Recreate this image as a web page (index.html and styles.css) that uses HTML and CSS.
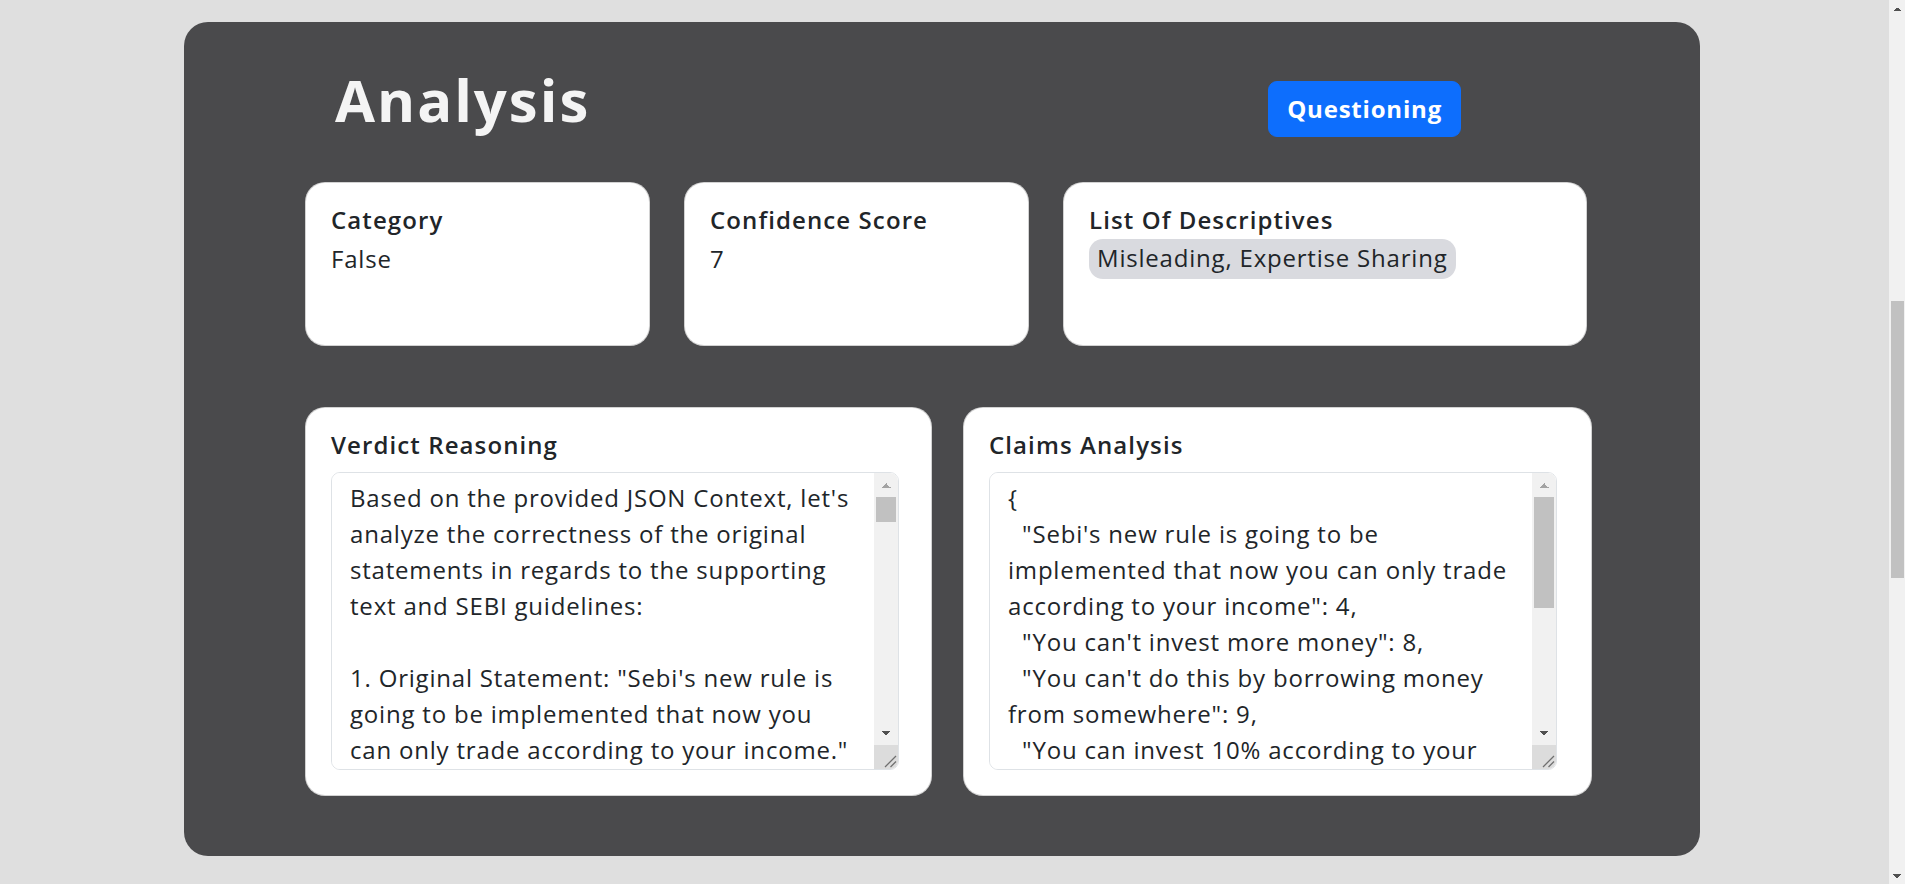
FILE: index.html
```html
<!DOCTYPE html>
<html lang="en">
<head>
<meta charset="utf-8">
<title>Analysis</title>
<link rel="stylesheet" href="styles.css">
</head>
<body>
<main class="panel">
  <header class="panel-head">
    <h1 class="panel-title">Analysis</h1>
    <button class="btn-verdict" type="button">Questioning</button>
  </header>

  <section class="stats">
    <div class="card">
      <h5 class="card-title">Category</h5>
      <div class="card-value">False</div>
    </div>
    <div class="card">
      <h5 class="card-title">Confidence Score</h5>
      <div class="card-value">7</div>
    </div>
    <div class="card">
      <h5 class="card-title">List Of Descriptives</h5>
      <div class="card-tags"><span class="tag">Misleading, Expertise Sharing</span></div>
    </div>
  </section>

  <section class="details">
    <div class="card card-tall">
      <h5 class="card-title card-title-gap">Verdict Reasoning</h5>
      <div class="field-wrap">
        <textarea class="field" readonly>Based on the provided JSON Context, let's
analyze the correctness of the original
statements in regards to the supporting
text and SEBI guidelines:

1. Original Statement: "Sebi's new rule is
going to be implemented that now you
can only trade according to your income."
   - Supporting Text: The supporting text mentions that SEBI has only released a consultation paper proposing stricter eligibility norms for derivatives trading. No final regulation linking trading limits to income has been notified so far.
   - Correctness: The statement presents a proposal as a confirmed rule, which is misleading. Until SEBI issues an official circular, there is no binding requirement on investors or brokers.
   - Verdict: False

2. Original Statement: "You can't invest more money."
   - Supporting Text: SEBI guidelines do not cap the total amount an individual can invest in equities, mutual funds or bonds.
   - Correctness: Investors remain free to invest any amount in the cash segment. Suitability checks are only being discussed for high-risk derivative products such as futures and options.
   - Verdict: False

3. Original Statement: "You can't do this by borrowing money from somewhere."
   - Supporting Text: SEBI regulates the Margin Trading Facility offered by registered brokers but does not prohibit the use of borrowed funds for investing.
   - Correctness: The claim exaggerates the regulation. Margin funding and pledging of securities are still permitted within the existing framework, subject to risk management rules.
   - Verdict: False

4. Original Statement: "You can invest 10% according to your income."
   - Supporting Text: No SEBI circular specifies a limit of 10% of income for investments or trading.
   - Correctness: The percentage appears to be invented or taken out of context from discussions on risk disclosure and investor protection.
   - Verdict: False

5. Expertise Sharing: The speaker presents these points as expert advice without citing any official source, circular number or date of implementation.
   - Correctness: Sharing personal interpretation as settled regulation can mislead retail investors into making hasty decisions.

Overall Assessment:
The statements mix partial information about a SEBI consultation paper with unverified claims. They misrepresent proposals as implemented rules and present opinion as expertise. Viewers are advised to rely on official SEBI circulars and registered advisors before making any investment or trading decisions.</textarea>
        <div class="vscroll" aria-hidden="true">
          <span class="vs-btn vs-up"></span>
          <span class="vs-track"><span class="vs-thumb" style="height: 25px"></span></span>
          <span class="vs-btn vs-down"></span>
          <span class="vs-corner"><svg viewBox="0 0 24 24" width="24" height="24"><line x1="11" y1="22" x2="22" y2="11"/><line x1="16.5" y1="22" x2="22" y2="16.5"/></svg></span>
        </div>
      </div>
    </div>
    <div class="card card-tall">
      <h5 class="card-title card-title-gap">Claims Analysis</h5>
      <div class="field-wrap">
        <textarea class="field" readonly>{
  "Sebi's new rule is going to be
implemented that now you can only trade
according to your income": 4,
  "You can't invest more money": 8,
  "You can't do this by borrowing money
from somewhere": 9,
  "You can invest 10% according to your
income": 6,
  "If your income is 10 lakhs, you can
trade only up to 1 lakh": 5,
  "This rule applies to futures and
options trading": 6,
  "Brokers will ask for income proof": 7,
  "You should follow this advice": 3
}</textarea>
        <div class="vscroll" aria-hidden="true">
          <span class="vs-btn vs-up"></span>
          <span class="vs-track"><span class="vs-thumb" style="height: 111px"></span></span>
          <span class="vs-btn vs-down"></span>
          <span class="vs-corner"><svg viewBox="0 0 24 24" width="24" height="24"><line x1="11" y1="22" x2="22" y2="11"/><line x1="16.5" y1="22" x2="22" y2="16.5"/></svg></span>
        </div>
      </div>
    </div>
  </section>
</main>

<div class="page-scroll" aria-hidden="true">
  <span class="ps-btn ps-up"></span>
  <span class="ps-track"><span class="ps-thumb" style="margin-top: 284px; height: 277px"></span></span>
  <span class="ps-btn ps-down"></span>
</div>
</body>
</html>
```

FILE: styles.css
```css
* {
  box-sizing: border-box;
}

html {
  background: #dfdfdf;
  scrollbar-width: none;
}

body {
  margin: 0;
  padding: 22px 0 28px;
  font-family: "Open Sans", "Noto Sans", sans-serif;
  color: #212529;
}

.panel {
  margin-left: 184px;
  width: 1516px;
  height: 834px;
  background: #4a4a4c;
  border-radius: 24px;
  padding: 43px 0 0 121px;
}

.panel-head {
  display: flex;
  justify-content: space-between;
  align-items: flex-start;
  margin: 0 239px 47px 30px;
  height: 70px;
}

.panel-title {
  margin: 0;
  font-size: 58px;
  line-height: 70px;
  font-weight: 700;
  letter-spacing: 2px;
  color: #f4f4f4;
}

.btn-verdict {
  margin-top: 16px;
  padding: 9px 18px;
  border: 1px solid #0d6efd;
  border-radius: 9px;
  background: #0d6efd;
  color: #fff;
  font-family: "Open Sans", "Noto Sans", sans-serif;
  font-size: 24px;
  line-height: 36px;
  font-weight: 700;
  letter-spacing: 0.8px;
}

.stats {
  display: grid;
  grid-template-columns: 345px 345px 524px;
  column-gap: 34px;
  height: 164px;
  margin-bottom: 61px;
}

.details {
  display: grid;
  grid-template-columns: 627px 629px;
  column-gap: 31px;
  height: 389px;
}

.card {
  background: #fff;
  border: 1px solid rgba(0, 0, 0, 0.175);
  border-radius: 20px;
  padding: 22px 25px 25px;
}

.card-title {
  margin: 0;
  font-size: 24px;
  line-height: 29px;
  font-weight: 600;
  letter-spacing: 1.1px;
  color: #212529;
}

.card-title-gap {
  margin-bottom: 13px;
}

.card-value {
  margin-top: 7px;
  font-size: 24px;
  line-height: 36px;
  letter-spacing: 0.8px;
}

.card-tags {
  margin-top: 5px;
  font-size: 24px;
  line-height: 36px;
  letter-spacing: 0.8px;
}

.tag {
  display: inline-block;
  padding: 1px 8px 3px;
  border-radius: 14px;
  background: #d9dadf;
}

.field-wrap {
  position: relative;
  width: 568px;
  height: 298px;
}

.field {
  display: block;
  width: 100%;
  height: 100%;
  margin: 0;
  padding: 7px 32px 9px 18px;
  border: 1px solid #dee2e6;
  border-radius: 9px;
  background: #fff;
  color: #212529;
  font-family: "Open Sans", "Noto Sans", sans-serif;
  font-size: 24px;
  line-height: 36px;
  letter-spacing: 0.8px;
  overflow-y: auto;
  scrollbar-width: none;
  resize: none;
  outline: none;
}

.vscroll {
  position: absolute;
  top: 1px;
  right: 1px;
  bottom: 1px;
  width: 24px;
  display: flex;
  flex-direction: column;
  background: #f1f1f1;
  border-radius: 0 8px 8px 0;
  overflow: hidden;
}

.vs-btn {
  flex: none;
  height: 24px;
  background-repeat: no-repeat;
  background-position: center;
  background-size: 10px 5px;
}

.vs-up {
  background-image: conic-gradient(from 135deg at 50% 0, #a3a3a3 90deg, transparent 0);
}

.vs-down {
  background-image: conic-gradient(from -45deg at 50% 100%, #505050 90deg, transparent 0);
}

.vs-track {
  flex: 1;
  padding: 0 2px;
}

.vs-thumb {
  display: block;
  background: #c1c1c1;
}

.vs-corner {
  flex: none;
  height: 24px;
  background: #dcdcdc;
}

.vs-corner svg {
  display: block;
  stroke: #6f6f6f;
  stroke-width: 1.3;
}

.page-scroll {
  position: fixed;
  top: 0;
  right: 0;
  width: 16px;
  height: 100vh;
  display: flex;
  flex-direction: column;
  background: #f1f1f1;
}

.ps-btn {
  flex: none;
  height: 17px;
  background-repeat: no-repeat;
  background-position: center;
  background-size: 8px 4px;
}

.ps-up {
  background-image: conic-gradient(from 135deg at 50% 0, #505050 90deg, transparent 0);
}

.ps-down {
  background-image: conic-gradient(from -45deg at 50% 100%, #505050 90deg, transparent 0);
}

.ps-track {
  flex: 1;
  padding: 0 1px 0 2px;
}

.ps-thumb {
  display: block;
  background: #c1c1c1;
}
```
